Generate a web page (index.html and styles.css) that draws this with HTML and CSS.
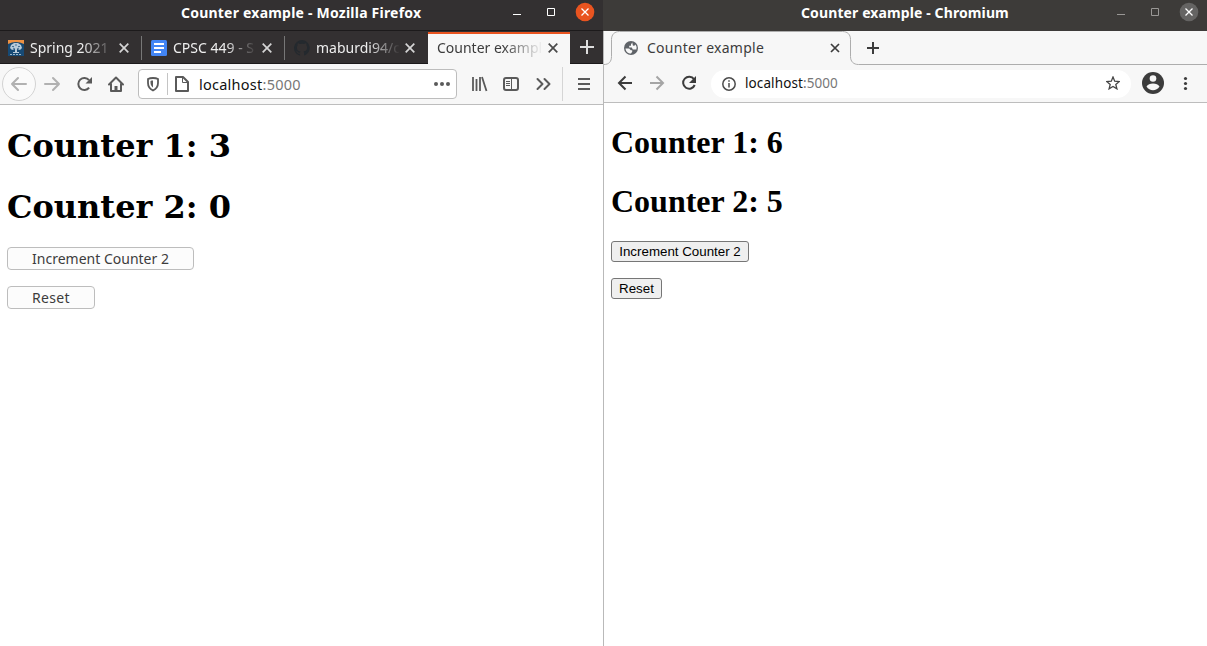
FILE: index.html
```html
<!DOCTYPE html>
<html lang="en">
<head>
<meta charset="utf-8">
<title>Counter example</title>
<link rel="stylesheet" href="styles.css">
</head>
<body>
<div class="desktop">
  <section class="window firefox">
    <header class="titlebar">
      <span class="title">Counter example - Mozilla Firefox</span>
      <svg class="controls" width="94" height="30" viewBox="0 0 94 30" fill="none" stroke="#fff">
        <path d="M10 14.500h8M44.500 8.500h7v7h-7z"/>
        <circle cx="82" cy="12" r="9.300" fill="#e95420" stroke="none"/>
        <path d="M78.500 8.500l7 7m0-7l-7 7" stroke-width="1.300"/>
      </svg>
    </header>
    <div class="tabs">
      <div class="tab">
        <svg width="16" height="16" viewBox="0 0 16 16"><path fill="#174a75" d="M0 0h16v16H0z"/><path fill="#ee9143" d="M0 0h16v4Q8 0 0 4z"/><path fill="#b8cad9" d="M2 8l1-3 3-2h4l3 2 1 3-2 2-3-1v3h2v1H5v-1h2V9l-3 1z"/><path stroke="#174a75" stroke-width=".7" d="M4 6.500h2m4 0h2M7 5h2M5 8l2 1m4-1L9 9"/><path stroke="#9ab5c9" stroke-dasharray="2 1" d="M2 14.500h12"/></svg>
        <span class="label label-dark">Spring 2021</span>
        <svg class="x" width="10" height="10" viewBox="0 0 10 10"><path d="M.7.7l8.600 8.600m0-8.600L.7 9.300"/></svg>
      </div>
      <div class="tab">
        <svg width="16" height="16" viewBox="0 0 16 16"><rect width="16" height="16" rx="1.500" fill="#4285f4"/><path stroke="#fff" stroke-width="2" d="M3 4h10M3 8h10M3 12h7"/></svg>
        <span class="label label-dark">CPSC 449 - S</span>
        <svg class="x" width="10" height="10" viewBox="0 0 10 10"><path d="M.7.7l8.600 8.600m0-8.600L.7 9.300"/></svg>
      </div>
      <div class="tab">
        <svg width="16" height="16" viewBox="0 0 16 16"><path fill="#24292e" d="M8 0a8 8 0 0 0-2.530 15.590c.4.070.55-.17.55-.38V13.700c-2.230.48-2.700-1.070-2.700-1.070-.36-.93-.89-1.170-.89-1.170-.73-.5.050-.49.050-.49.810.06 1.240.83 1.240.83.710 1.230 1.870.87 2.330.67.070-.52.280-.87.500-1.070-1.780-.2-3.640-.89-3.640-3.950 0-.87.310-1.590.82-2.150-.08-.2-.36-1.020.08-2.120 0 0 .67-.21 2.200.82a7.600 7.600 0 0 1 4 0c1.530-1.040 2.200-.82 2.200-.82.440 1.100.16 1.920.08 2.120.51.560.82 1.270.82 2.150 0 3.070-1.870 3.750-3.650 3.950.29.250.54.730.54 1.480v2.200c0 .21.150.46.550.38A8 8 0 0 0 8 0"/></svg>
        <span class="label label-dark">maburdi94/c</span>
        <svg class="x" width="10" height="10" viewBox="0 0 10 10"><path d="M.7.7l8.600 8.600m0-8.600L.7 9.300"/></svg>
      </div>
      <div class="tab active">
        <span class="label label-active">Counter exampl</span>
        <svg class="x" width="10" height="10" viewBox="0 0 10 10"><path d="M.7.7l8.600 8.600m0-8.600L.7 9.300"/></svg>
      </div>
      <svg class="newtab" width="33" height="32" viewBox="0 0 33 32"><path d="M10 16h14M17 9v14" stroke="#ddd" stroke-width="2"/></svg>
    </div>
    <div class="toolbar">
      <svg class="nav" width="138" height="40" viewBox="0 0 138 40" fill="none" stroke="#5a5a5a" stroke-width="2">
        <circle cx="19" cy="20" r="16.500" fill="#fafafa" stroke="#d3d3d3" stroke-width="1"/>
        <path stroke="#b1b1b1" stroke-linecap="round" stroke-linejoin="round" d="M26 20H12m6-6l-6 6 6 6M45 20h14m-6-6l6 6-6 6"/>
        <path d="M89 16.200a6 6 0 1 0 .1 7.400"/><path fill="#5a5a5a" stroke="none" d="M92 13v6.500h-6.500z"/>
        <path stroke-linejoin="round" stroke-linecap="round" d="M109 20.500l7-7 7 7M111 20v7h10v-7"/><path d="M116 27v-5" stroke-width="3"/>
      </svg>
      <div class="address">
        <svg width="54" height="28" viewBox="0 0 54 28" fill="none" stroke="#5a5a5a">
          <path stroke-width="1.800" d="M14 8c2 0 4 .5 5 1.100V13c0 4-2 6-5 7.500C11 19 9 17 9 13V9.100C10 8.500 12 8 14 8z"/><path fill="#5a5a5a" stroke="none" d="M14 10.500v7c-1.700-1.300-2.500-3-2.500-5v-1.500c.8-.4 1.600-.5 2.500-.5z"/>
          <path stroke="#c4c4c4" d="M28.500 3v22"/>
          <path stroke-width="2" stroke-linejoin="round" d="M37 7h7l5 5v9H37z"/><path d="M43.500 7v5.500H49"/>
        </svg>
        <span class="url">localhost<span>:5000</span></span>
        <svg class="dots" width="18" height="6" viewBox="0 0 18 6" fill="#5a5a5a"><circle cx="3" cy="3" r="2"/><circle cx="9" cy="3" r="2"/><circle cx="15" cy="3" r="2"/></svg>
      </div>
      <svg class="tools" width="146" height="40" viewBox="0 0 146 40" fill="none" stroke="#5a5a5a" stroke-width="2">
        <path stroke-width="1.800" d="M16 13v14M19.500 15v12M23 13v14M25 13l4.500 14"/>
        <rect x="47" y="14" width="14" height="12" rx="2"/><path stroke-width="1" d="M54.500 14v12M49 17.500h4M49 19.500h4M49 21.500h4"/>
        <path stroke-linejoin="round" stroke-linecap="round" d="M80.500 15l5 5-5 5M87.500 15l5 5-5 5"/>
        <path stroke="#d5d5d5" stroke-width="1" d="M105.500 3v34"/>
        <path d="M121 15h12M121 20h12M121 25h12"/>
      </svg>
    </div>
    <main class="page">
      <h1>Counter 1: 3</h1>
      <h1>Counter 2: 0</h1>
      <button class="increment">Increment Counter 2</button>
      <button class="reset">Reset</button>
    </main>
  </section>
  <section class="window chromium">
    <header class="titlebar">
      <span class="title">Counter example - Chromium</span>
      <svg class="controls" width="94" height="30" viewBox="0 0 94 30" fill="none" stroke="#999795">
        <path d="M10 14.500h8M44.500 8.500h7v7h-7z"/>
        <circle cx="82" cy="12" r="9.300" fill="#656463" stroke="none"/>
        <path d="M78.500 8.500l7 7m0-7l-7 7" stroke="#fff" stroke-width="1.300"/>
      </svg>
    </header>
    <div class="tabs">
      <svg class="outline" width="603" height="34" viewBox="0 0 603 34"><path d="M0 33.500c5 0 7.500-3 7.500-8V8.500c0-5 3-8 8-8h223c5 0 8 3 8 8v17c0 5 3 8 8 8H603" fill="none" stroke="#adadad"/></svg>
      <div class="tab">
        <svg width="14" height="14" viewBox="0 0 14 14"><circle cx="7" cy="7" r="7" fill="#5f6368"/><path fill="#f7f7f7" d="M8.300 1.500L7 3.300v1.500H5.200v1.600h2.600l1 2h3.600A5.600 5.600 0 0 0 11.500 3.500L10 5 8.800 4.200zM1.500 7.500h3.700l1.600 1.700h1.400v1.600L7 12.600C4 12.600 1.700 10.500 1.500 7.500z"/></svg>
        <span class="label">Counter example</span>
        <svg class="x" width="10" height="10" viewBox="0 0 10 10"><path d="M1 1l8 8m0-8L1 9"/></svg>
      </div>
      <svg class="newtab" width="14" height="14" viewBox="0 0 14 14"><path d="M1 7h12M7 1v12" stroke="#3c3c3c" stroke-width="2"/></svg>
    </div>
    <div class="toolbar">
      <svg class="nav" width="107" height="37" viewBox="0 0 107 37" fill="none" stroke="#3c3c3c" stroke-width="2">
        <path d="M28 18H15m6.500-6.500L15 18l6.500 6.500"/><path stroke="#a5a5a5" d="M46 18h13m-6.500-6.500L59 18l-6.500 6.500"/>
        <path d="M90 14.200a6 6 0 1 0 .7 5.800"/><path fill="#3c3c3c" stroke="none" d="M92 11v7h-7z"/>
      </svg>
      <div class="address">
        <svg width="14" height="14" viewBox="0 0 14 14" fill="none" stroke="#4c4c4c"><circle cx="7" cy="7" r="6.200" stroke-width="1.500"/><path stroke-width="1.500" d="M7 6v4.500M7 3.300v1.500"/></svg>
        <span class="url">localhost<span>:5000</span></span>
        <svg class="star" width="14" height="14" viewBox="0 0 14 14"><path d="M7 1l1.700 4.200 4.600.3-3.500 2.900 1.100 4.400L7 10.400l-3.900 2.400 1.100-4.400L.7 5.500l4.600-.3z" fill="none" stroke="#454545" stroke-width="1.300"/></svg>
      </div>
      <svg class="tools" width="76" height="37" viewBox="0 0 76 37" fill="#3c3c3c"><circle cx="22" cy="18" r="11"/><circle cx="22" cy="13.500" r="3.300" fill="#f7f7f7"/><path fill="#f7f7f7" d="M15.500 21.500c2-4 11-4 13 0-3 5-10 5-13 0z"/><circle cx="54.500" cy="13.500" r="1.600"/><circle cx="54.500" cy="18.500" r="1.600"/><circle cx="54.500" cy="23.500" r="1.600"/></svg>
    </div>
    <main class="page">
      <h1>Counter 1: 6</h1>
      <h1>Counter 2: 5</h1>
      <button class="increment">Increment Counter 2</button>
      <button class="reset">Reset</button>
    </main>
  </section>
</div>
</body>
</html>
```
FILE: styles.css
```css
* { box-sizing: border-box; }
body { margin: 0; background: #fff; font-family: "Noto Sans", sans-serif; overflow: hidden; }
svg { display: block; flex: none; }
.desktop { display: grid; grid-template-columns: 603px 604px; height: 646px; }
.window { display: flex; flex-direction: column; min-width: 0; }
.chromium { border-left: 1px solid #b9b9b9; }

.titlebar { display: flex; align-items: flex-start; justify-content: space-between; height: 30px; background: #333031; color: #fff; }
.title { font-weight: 700; font-size: 14px; line-height: 26px; white-space: nowrap; }
.firefox .title { padding-left: 181px; letter-spacing: 0.22px; }
.firefox .controls { margin-right: 6px; }
.chromium .titlebar { height: 31px; background: #3d3b39; margin-left: -1px; }
.chromium .title { padding-left: 198px; letter-spacing: 0.11px; }
.chromium .controls { margin-right: 6px; }

.tabs { display: flex; height: 34px; }
.label { font-size: 14px; line-height: 20px; white-space: nowrap; overflow: hidden; }
.x { fill: none; stroke: #d5d5d5; stroke-width: 1.7; }
.firefox .tabs { background: #333031; border-top: 1px solid #1c1a1b; }
.firefox .tab { display: flex; align-items: center; width: 142px; height: 33px; padding: 1px 13px 0 8px; border-bottom: 1px solid #1c1a1b; background: linear-gradient(#777, #777) right 5px / 1px 24px no-repeat; }
.firefox .tab:nth-child(2) { width: 143px; padding-left: 9px; }
.firefox .tab:nth-child(3) { width: 143px; padding-left: 9px; background: none; }
.firefox .tab .label { margin-left: 6px; }
.firefox .tab .x { margin-left: auto; }
.firefox .tab.active { background: #f7f7f7; height: 32px; margin-top: 1px; border-top: 2px solid #e95420; border-bottom: 0; padding: 0 12px 2px 9px; color: #3c3c3c; }
.firefox .tab.active .label { margin-left: 0; }
.active .x { stroke: #4a4a4a; }
.label-dark { width: 84px; color: #eee; }
.label-active { width: 106px; }
.label-dark, .label-active { -webkit-mask-image: linear-gradient(to right, #000 62%, transparent); mask-image: linear-gradient(to right, #000 62%, transparent); }
.firefox .newtab { height: 33px; border-bottom: 1px solid #1c1a1b; }

.toolbar { display: flex; align-items: center; background: #f7f7f7; }
.firefox .toolbar { height: 41px; border-bottom: 1px solid #bdbdbd; }
.address { display: flex; align-items: center; background: #fff; }
.firefox .address { width: 319px; height: 30px; border: 1px solid #bdbdbd; border-radius: 4px; }
.firefox .url { margin-left: 6px; font-size: 14.5px; line-height: 20px; letter-spacing: 0.25px; color: #111; }
.url { white-space: nowrap; }
.url span { color: #777; }
.dots { margin-left: auto; margin-right: 5px; }

.chromium .tabs { position: relative; background: #f7f7f7; align-items: center; }
.chromium .outline { position: absolute; left: 0; top: 0; }
.chromium .tab { display: flex; align-items: center; width: 247px; padding-left: 20px; padding-right: 11px; color: #3c3c3c; }
.chromium .label { margin-left: 9px; letter-spacing: 0.27px; }
.chromium .tab .x { margin-left: auto; stroke: #3c3c3c; }
.chromium .newtab { margin-left: 15px; }
.chromium .toolbar { height: 38px; border-bottom: 1px solid #bdbdbd; }
.chromium .address { width: 420px; height: 28px; border-radius: 14px; padding: 0 11px; }
.chromium .url { margin-left: 9px; padding-bottom: 2px; font-size: 13.5px; line-height: 18px; letter-spacing: 0.1px; color: #111; }
.star { margin-left: auto; margin-bottom: 1px; }

.page { display: flex; flex-direction: column; align-items: flex-start; padding-left: 7px; color: #000; }
h1 { margin: 0; font-size: 32px; font-weight: 700; white-space: nowrap; }
button { display: block; padding: 0; text-align: center; white-space: nowrap; }
.firefox h1 { font-family: "DejaVu Serif", serif; line-height: 39px; margin-bottom: 22px; }
.firefox .page { padding-top: 22px; }
.firefox button { height: 23px; border: 1px solid #bdbdbd; border-radius: 4px; background: #fcfcfc; color: #3c3c3c; font: 14px/20px "Noto Sans", sans-serif; }
.firefox .increment { width: 187px; margin-bottom: 16px; margin-top: -2px; }
.firefox .reset { width: 88px; letter-spacing: 0.3px; }
.chromium h1 { font-family: "Liberation Serif", serif; line-height: 37px; margin-bottom: 22px; }
.chromium .page { padding-top: 21px; }
.chromium button { height: 21px; border: 1px solid #767676; border-radius: 3px; background: #efefef; color: #000; font: 13.333px/17px "Liberation Sans", sans-serif; }
.chromium .increment { width: 138px; margin-bottom: 16px; margin-top: -1px; }
.chromium .reset { width: 51px; }
```
